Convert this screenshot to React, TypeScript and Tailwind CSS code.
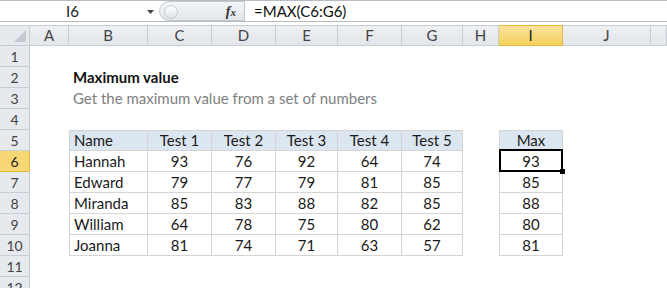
import React from 'react';

const cols = ['A', 'B', 'C', 'D', 'E', 'F', 'G', 'H', 'I', 'J', ''];

const scores = [
  { name: 'Hannah', t: [93, 76, 92, 64, 74], max: 93 },
  { name: 'Edward', t: [79, 77, 79, 81, 85], max: 85 },
  { name: 'Miranda', t: [85, 83, 88, 82, 85], max: 88 },
  { name: 'William', t: [64, 78, 75, 80, 62], max: 80 },
  { name: 'Joanna', t: [81, 74, 71, 63, 57], max: 81 },
];

const font = { fontFamily: 'Lato, "Open Sans", sans-serif' };

// one sheet row: row number + 11 cells
const SheetRow = ({ n, children }: { n: number; children?: React.ReactNode }) => {
  const active = n === 6;
  return (
    <>
      <div
        className={`h-[21px] flex items-center justify-center text-[14px] border-b border-r ${
          active
            ? 'bg-[#f7d774] border-[#e2b740] text-[#222]'
            : 'bg-[#e6e9ee] border-[#c8cdd4] text-[#444]'
        }`}
      >
        {n}
      </div>
      {children ?? Array.from({ length: 11 }).map((_, i) => <div key={i} className="h-[21px]" />)}
    </>
  );
};

const Blank = () => <div className="h-[21px]" />;

const Cell = ({
  children,
  left,
  head,
  first,
  top,
  selected,
}: {
  children?: React.ReactNode;
  left?: boolean;
  head?: boolean;
  first?: boolean;
  top?: boolean;
  selected?: boolean;
}) => (
  <div
    className={`relative h-[21px] flex items-center text-[15px] text-[#1a1a1a] border-r border-b border-[#d4d4d4] ${
      left ? 'justify-start pl-[4px]' : 'justify-center'
    } ${head ? 'bg-[#dce6f1]' : 'bg-white'} ${first ? 'border-l' : ''} ${top ? 'border-t' : ''} ${
      selected ? 'z-10' : ''
    }`}
  >
    {children}
    {selected && (
      <>
        <div className="absolute -left-[1px] -top-[2px] -right-[1px] -bottom-[1px] border-2 border-black" />
        <div className="absolute -right-[3px] -bottom-[3px] w-[5px] h-[5px] bg-black" />
      </>
    )}
  </div>
);

export default function App() {
  return (
    <div className="w-[667px] h-[288px] overflow-hidden bg-white" style={font}>
      {/* formula bar */}
      <div className="h-[22px] flex items-stretch border-t border-b border-[#b7bcc3]">
        <div className="w-[159px] flex items-center relative">
          <span className="w-[145px] text-center text-[15px] text-[#222]">I6</span>
          <svg width="8" height="5" viewBox="0 0 8 5" className="absolute left-[147px] top-[9px]">
            <path d="M0 0h7L3.5 4z" fill="#444" />
          </svg>
        </div>
        <div className="w-[86px] flex items-center justify-end pr-[8px] rounded-l-full bg-gradient-to-b from-[#f3f5f8] to-[#e2e6eb] border border-[#c3c8cf] relative">
          <div className="absolute left-[4px] top-[3px] w-[14px] h-[14px] rounded-full bg-gradient-to-b from-white to-[#dde2e8] border border-[#c6ccd3]" />
          <span className="italic font-bold text-[14px] text-[#333]" style={{ fontFamily: '"Liberation Serif", serif' }}>
            f<span className="text-[11px]">x</span>
          </span>
        </div>
        <div className="flex-1 flex items-center pl-[9px] text-[15px] text-[#111]">=MAX(C6:G6)</div>
      </div>

      <div className="h-[3px]" />

      {/* sheet */}
      <div className="grid grid-cols-[30px_39px_79px_64px_64px_62px_64px_61px_36px_64px_88px_1fr]">
        {/* column headers */}
        <div className="h-[21px] relative bg-[#e6e9ee] border-t border-b border-r border-[#c8cdd4]">
          <svg width="12" height="12" viewBox="0 0 12 12" className="absolute right-[3px] bottom-[3px]">
            <path d="M12 0v12H0z" fill="#c4c9d0" />
          </svg>
        </div>
        {cols.map((c, i) => (
          <div
            key={i}
            className={`h-[21px] flex items-center justify-center text-[15px] border-t border-b border-r ${
              c === 'I'
                ? 'bg-gradient-to-b from-[#fbe39a] to-[#f5cf59] border-[#e2b740] text-[#222]'
                : 'bg-gradient-to-b from-[#eef0f3] to-[#e2e5ea] border-[#c8cdd4] text-[#444]'
            }`}
          >
            {c}
          </div>
        ))}

        <SheetRow n={1} />
        <SheetRow n={2}>
          <Blank />
          <div className="h-[21px] col-span-10 flex items-center pl-[4px] text-[15px] font-bold text-[#111]">
            Maximum value
          </div>
        </SheetRow>
        <SheetRow n={3}>
          <Blank />
          <div className="h-[21px] col-span-10 flex items-center pl-[4px] text-[15px] text-[#808080]">
            Get the maximum value from a set of numbers
          </div>
        </SheetRow>
        <SheetRow n={4} />
        <SheetRow n={5}>
          <Blank />
          <Cell head first top left>
            Name
          </Cell>
          {[1, 2, 3, 4, 5].map((t) => (
            <Cell key={t} head top>
              Test {t}
            </Cell>
          ))}
          <Blank />
          <Cell head first top>
            Max
          </Cell>
          <Blank />
          <Blank />
        </SheetRow>
        {scores.map((s, r) => (
          <SheetRow key={s.name} n={6 + r}>
            <Blank />
            <Cell first left>
              {s.name}
            </Cell>
            {s.t.map((v, i) => (
              <Cell key={i}>{v}</Cell>
            ))}
            <Blank />
            <Cell first selected={r === 0}>
              {s.max}
            </Cell>
            <Blank />
            <Blank />
          </SheetRow>
        ))}
        <SheetRow n={11} />
        <SheetRow n={12} />
      </div>
    </div>
  );
}
